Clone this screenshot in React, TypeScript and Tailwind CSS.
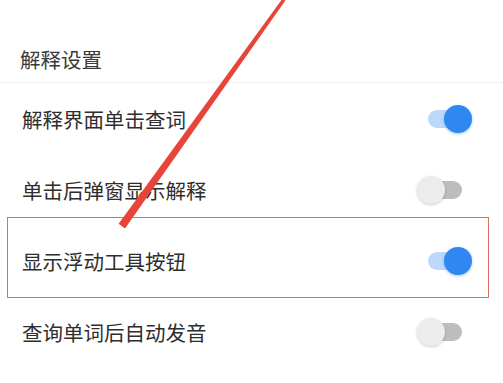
import React from "react"

const rows = [
  { label: "解释界面单击查词", on: true },
  { label: "单击后弹窗显示解释", on: false },
  { label: "显示浮动工具按钮", on: true },
  { label: "查询单词后自动发音", on: false },
]

function Toggle({ on }: { on: boolean }) {
  return (
    <div className="relative w-[56px] h-[30px]">
      <div
        className={
          on
            ? "absolute left-[11px] top-[6px] w-[34px] h-[18px] rounded-full bg-[#bcd9fb]"
            : "absolute left-[11px] top-[6px] w-[34px] h-[18px] rounded-full bg-[#bdbdbd]"
        }
      />
      <div
        className={
          on
            ? "absolute left-[27px] top-[1px] w-[28px] h-[28px] rounded-full bg-[#2f88f0] shadow-[0_1px_3px_rgba(47,136,240,0.45)]"
            : "absolute left-0 top-[1px] w-[28px] h-[28px] rounded-full bg-[#ececec] shadow-[0_1px_3px_rgba(0,0,0,0.2)]"
        }
      />
    </div>
  )
}

export default function App() {
  return (
    <div
      className="relative w-[503px] h-[383px] bg-white overflow-hidden"
      style={{ fontFamily: '"Noto Sans CJK SC", "Noto Sans", sans-serif' }}
    >
      <div className="h-[83px] flex items-end pl-[20px] pb-[9px] border-b border-[#f0f0f0]">
        <span className="text-[20.5px] leading-[28px] text-[#3a3a3a]">解释设置</span>
      </div>

      {rows.map((r) => (
        <div key={r.label} className="h-[71px] flex items-center justify-between pl-[22px] pr-[30px]">
          <span className="text-[20.5px] leading-[28px] text-[#2e2e2e]">{r.label}</span>
          <Toggle on={r.on} />
        </div>
      ))}

      {/* annotation box */}
      <div className="absolute left-[7px] top-[217px] w-[482px] h-[81px] border-[1.5px] border-[#df6b65]" />

      {/* annotation arrow */}
      <svg className="absolute left-0 top-0" width="503" height="383" viewBox="0 0 503 383">
        <polygon points="282.2,-1 285.4,0.4 125,228.4 118.6,223.8" fill="#e8453a" />
      </svg>
    </div>
  )
}
